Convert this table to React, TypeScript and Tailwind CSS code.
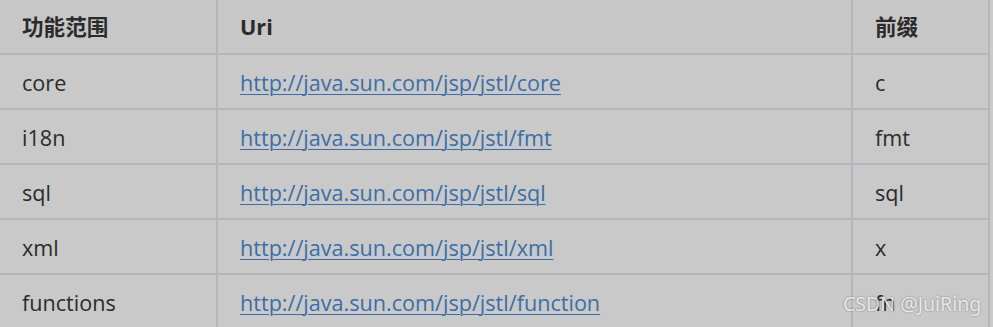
const ROWS: Array<{ scope: string; uri: string; prefix: string }> = [
  { scope: 'core', uri: 'http://java.sun.com/jsp/jstl/core', prefix: 'c' },
  { scope: 'i18n', uri: 'http://java.sun.com/jsp/jstl/fmt', prefix: 'fmt' },
  { scope: 'sql', uri: 'http://java.sun.com/jsp/jstl/sql', prefix: 'sql' },
  { scope: 'xml', uri: 'http://java.sun.com/jsp/jstl/xml', prefix: 'x' },
  { scope: 'functions', uri: 'http://java.sun.com/jsp/jstl/function', prefix: 'fn' },
]

const cell = 'flex h-[55px] items-center border-b-2 border-r-2 border-[#b3b6ba] px-[22px]'

export default function App() {
  return (
    <div
      className="relative h-[327px] w-[993px] overflow-hidden bg-[#cbcbcb] text-[21.6px] text-[#2b2b2b]"
      style={{ fontFamily: '"Open Sans", "Noto Sans CJK SC", sans-serif' }}
    >
      <div className="grid w-[990px] grid-cols-[218px_635px_137px] bg-[#c7c7c7]">
        <div className={`${cell} pt-[2px] font-bold`}>功能范围</div>
        <div className={`${cell} pt-[2px] font-bold`}>Uri</div>
        <div className={`${cell} pt-[2px] font-bold px-[21px]`}>前缀</div>
        {ROWS.map(row => (
          <div key={row.scope} className="contents">
            <div className={`${cell} pt-[3px] bg-[#c9c9c9]`}>{row.scope}</div>
            <div className={`${cell} pt-[3px] bg-[#c9c9c9]`}>
              <a href="#" className="text-[#3b6ea8] underline decoration-1 underline-offset-[3px]">
                {row.uri}
              </a>
            </div>
            <div className={`${cell} pt-[3px] bg-[#c9c9c9] px-[21px]`}>{row.prefix}</div>
          </div>
        ))}
      </div>

      {/* watermark sits over the last prefix cell, as in the screenshot */}
      <span
        className="absolute left-[843px] top-[289px] text-[19.5px] text-white/80 [text-shadow:0_0_2px_rgba(0,0,0,0.45)]"
        style={{ fontFamily: '"Noto Sans", sans-serif' }}
      >
        CSDN @JuiRing
      </span>
    </div>
  )
}
